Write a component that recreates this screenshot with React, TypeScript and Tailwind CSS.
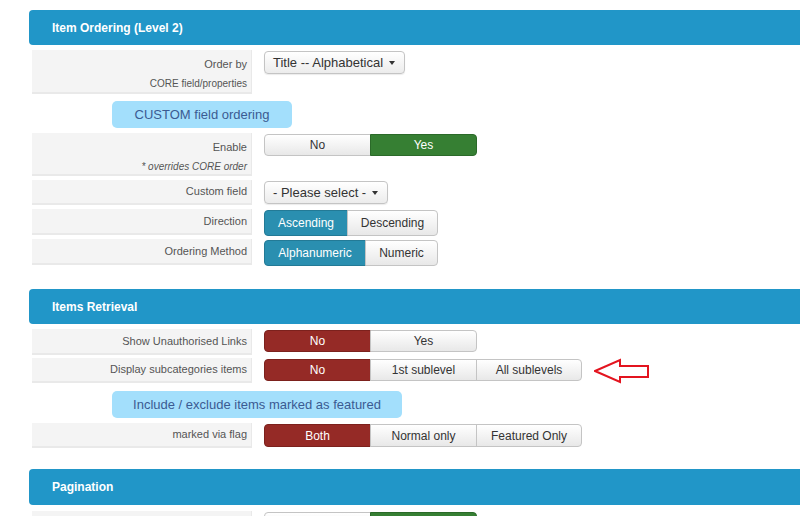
import type { ReactNode } from "react";

type Tone = "teal" | "green" | "red";

type Seg = { label: string; width: number; tone?: Tone };

const toneClass: Record<Tone, string> = {
  teal: "bg-[#2a8fb0] text-white border-[#237a96]",
  green: "bg-[#367f33] text-white border-[#2b6a29]",
  red: "bg-[#952a26] text-white border-[#7c211d]",
};

function Header({ title, h = 35 }: { title: string; h?: number }) {
  return (
    <div
      style={{ height: h }}
      className="flex items-center rounded-l-[4px] bg-[#2196c8] pl-[23px] text-[12px] font-bold text-white"
    >
      {title}
    </div>
  );
}

function Label({ children, tall }: { children: ReactNode; tall?: boolean }) {
  return (
    <div
      className={`ml-[3px] flex w-[220px] shrink-0 flex-col items-end border-b-2 border-r border-[#e9e9e9] bg-[#f4f4f4] pr-[4px] text-[11px] text-[#555] ${
        tall ? "justify-start pt-[6px]" : "justify-center"
      }`}
    >
      {children}
    </div>
  );
}

function Segmented({ items, h = 22 }: { items: Seg[]; h?: number }) {
  return (
    <div className="flex" style={{ height: h }}>
      {items.map((s, i) => (
        <div
          key={i}
          style={{ width: s.width }}
          className={`flex items-center justify-center border text-[12px] ${
            i === 0 ? "rounded-l-[4px]" : "-ml-px"
          } ${i === items.length - 1 ? "rounded-r-[4px]" : ""} ${
            s.tone
              ? toneClass[s.tone]
              : "border-[#c4c4c4] bg-gradient-to-b from-white to-[#e8e8e8] text-[#333]"
          }`}
        >
          {s.label}
        </div>
      ))}
    </div>
  );
}

function Dropdown({ text, width }: { text: string; width: number }) {
  return (
    <div
      style={{ width }}
      className="flex h-[23px] items-center rounded-[4px] border border-[#c4c4c4] bg-gradient-to-b from-white to-[#ececec] pl-[8px] text-[13px] text-[#333] shadow-[0_1px_1px_rgba(0,0,0,0.08)]"
    >
      {text}
      <span className="ml-[6px] inline-block h-0 w-0 border-x-[3px] border-t-[4px] border-x-transparent border-t-[#333]" />
    </div>
  );
}

function Badge({ text, width }: { text: string; width: number }) {
  return (
    <div
      style={{ width }}
      className="ml-[83px] flex h-[27px] items-center justify-center rounded-[5px] bg-[#a3dffc] text-[13px] text-[#3b5b92]"
    >
      {text}
    </div>
  );
}

function Row({ h, label, tall, children }: { h: number; label: ReactNode; tall?: boolean; children: ReactNode }) {
  return (
    <div className="flex gap-[12px]" style={{ height: h }}>
      <Label tall={tall}>{label}</Label>
      <div className="pt-px">{children}</div>
    </div>
  );
}

function Arrow() {
  return (
    <svg width="56" height="26" viewBox="0 0 56 26" className="ml-[12px] mt-[-1px]">
      <path
        d="M1 13 L26 2 L26 8 L54 8 L54 19 L26 19 L26 24 Z"
        fill="none"
        stroke="#e3141f"
        strokeWidth="2"
        strokeLinejoin="miter"
      />
    </svg>
  );
}

export default function App() {
  return (
    <div className="min-h-screen bg-white pl-[29px] pt-[10px] font-['Liberation_Sans',Arial,sans-serif]">
      <Header title="Item Ordering (Level 2)" />
      <div className="mt-[5px]">
        <Row h={44} tall label={<><span>Order by</span><span className="mt-[3px] text-[10px]">CORE field/properties</span></>}>
          <Dropdown text="Title -- Alphabetical" width={141} />
        </Row>
      </div>
      <div className="mt-[7px]">
        <Badge text="CUSTOM field ordering" width={180} />
      </div>
      <div className="mt-[5px]">
        <Row h={43} tall label={<><span>Enable</span><span className="mt-[3px] text-[10px] italic">* overrides CORE order</span></>}>
          <Segmented items={[{ label: "No", width: 107 }, { label: "Yes", width: 107, tone: "green" }]} />
        </Row>
      </div>
      <div className="mt-[4px]">
        <Row h={25} label="Custom field">
          <Dropdown text="- Please select -" width={124} />
        </Row>
      </div>
      <div className="mt-[4px]">
        <Row h={26} label="Direction">
          <Segmented h={26} items={[{ label: "Ascending", width: 84, tone: "teal" }, { label: "Descending", width: 91 }]} />
        </Row>
      </div>
      <div className="mt-[4px]">
        <Row h={26} label="Ordering Method">
          <Segmented h={26} items={[{ label: "Alphanumeric", width: 102, tone: "teal" }, { label: "Numeric", width: 73 }]} />
        </Row>
      </div>

      <div className="mt-[24px]">
        <Header title="Items Retrieval" />
      </div>
      <div className="mt-[5px]">
        <Row h={26} label="Show Unauthorised Links">
          <Segmented items={[{ label: "No", width: 107, tone: "red" }, { label: "Yes", width: 107 }]} />
        </Row>
      </div>
      <div className="mt-[3px]">
        <Row h={25} label="Display subcategories items">
          <div className="flex">
            <Segmented
              items={[
                { label: "No", width: 107, tone: "red" },
                { label: "1st sublevel", width: 107 },
                { label: "All sublevels", width: 106 },
              ]}
            />
            <Arrow />
          </div>
        </Row>
      </div>
      <div className="mt-[8px]">
        <Badge text="Include / exclude items marked as featured" width={290} />
      </div>
      <div className="mt-[5px]">
        <Row h={25} label="marked via flag">
          <Segmented
            h={23}
            items={[
              { label: "Both", width: 107, tone: "red" },
              { label: "Normal only", width: 107 },
              { label: "Featured Only", width: 106 },
            ]}
          />
        </Row>
      </div>

      <div className="mt-[21px]">
        <Header title="Pagination" h={36} />
      </div>
      <div className="mt-[6px]">
        <Row h={26} label="">
          <Segmented items={[{ label: "", width: 107 }, { label: "", width: 107, tone: "green" }]} />
        </Row>
      </div>
    </div>
  );
}
